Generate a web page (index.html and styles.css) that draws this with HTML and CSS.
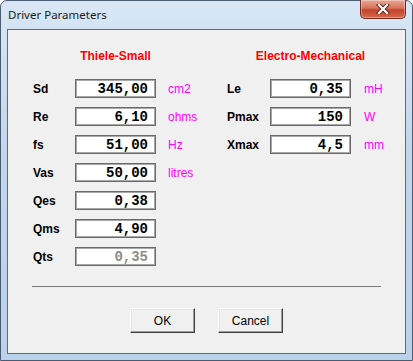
FILE: index.html
```html
<!DOCTYPE html>
<html lang="en">
<head>
    <meta charset="UTF-8">
    <title>Driver Parameters</title>
    <link rel="stylesheet" href="styles.css">
</head>
<body>
    <div class="window">
        <div class="titlebar">
            <span class="title">Driver Parameters</span>
            <button class="close" type="button">
                <svg width="18" height="10" viewBox="0 0 18 10">
                    <path d="M5 1 L13 9 M13 1 L5 9" stroke="#5a1e14" stroke-width="4" stroke-linecap="square"/>
                    <path d="M5 1 L13 9 M13 1 L5 9" stroke="#ffffff" stroke-width="2.2" stroke-linecap="square"/>
                </svg>
            </button>
        </div>

        <div class="client">
            <div class="columns">
                <div class="group">
                    <div class="heading"><span>Thiele-Small</span></div>

                    <label for="sd">Sd</label>
                    <input type="text" id="sd" value="345,00">
                    <span class="unit">cm2</span>

                    <label for="re">Re</label>
                    <input type="text" id="re" value="6,10">
                    <span class="unit">ohms</span>

                    <label for="fs">fs</label>
                    <input type="text" id="fs" value="51,00">
                    <span class="unit">Hz</span>

                    <label for="vas">Vas</label>
                    <input type="text" id="vas" value="50,00">
                    <span class="unit">litres</span>

                    <label for="qes">Qes</label>
                    <input type="text" id="qes" value="0,38">
                    <span class="unit"></span>

                    <label for="qms">Qms</label>
                    <input type="text" id="qms" value="4,90">
                    <span class="unit"></span>

                    <label for="qts">Qts</label>
                    <input type="text" id="qts" value="0,35" disabled>
                    <span class="unit"></span>
                </div>

                <div class="group">
                    <div class="heading"><span>Electro-Mechanical</span></div>

                    <label for="le">Le</label>
                    <input type="text" id="le" value="0,35">
                    <span class="unit">mH</span>

                    <label for="pmax">Pmax</label>
                    <input type="text" id="pmax" value="150">
                    <span class="unit">W</span>

                    <label for="xmax">Xmax</label>
                    <input type="text" id="xmax" value="4,5">
                    <span class="unit">mm</span>
                </div>
            </div>

            <hr class="separator">

            <div class="buttons">
                <button type="button" class="btn">OK</button>
                <button type="button" class="btn">Cancel</button>
            </div>
        </div>
    </div>
</body>
</html>
```

FILE: styles.css
```css
html, body {
    margin: 0;
    padding: 0;
}
body {
    width: 413px;
    height: 361px;
    overflow: hidden;
    background: #ffffff;
}
.window {
    box-sizing: border-box;
    width: 413px;
    height: 361px;
    border: 1px solid #4b5b70;
    border-radius: 7px 7px 0 0;
    background: linear-gradient(to bottom, #d9e7f5 0%, #c2d7ee 40%, #b9d1ea 100%);
    display: flex;
    flex-direction: column;
}
.titlebar {
    height: 28px;
    display: flex;
    align-items: flex-start;
    justify-content: space-between;
}
.title {
    font-family: "Noto Sans", sans-serif;
    font-size: 11.5px;
    color: #1b1b1b;
    margin: 6px 0 0 7px;
}
.close {
    width: 46px;
    height: 19px;
    margin: -1px 6px 0 0;
    padding: 0;
    border: 1px solid #6b2a1e;
    border-top: none;
    border-radius: 0 0 5px 5px;
    background: linear-gradient(to bottom, #e9a796 0%, #d6735c 45%, #c2432a 55%, #d46a4c 100%);
    box-shadow: inset 0 0 0 1px rgba(255, 255, 255, 0.35);
    display: flex;
    align-items: center;
    justify-content: center;
}
.client {
    flex: 1;
    margin: 0 6px 6px 6px;
    border: 1px solid #5d6b7c;
    background: #f0f0f0;
    padding: 19px 0 0 0;
    font-family: "Liberation Sans", Arial, sans-serif;
    font-size: 12px;
}
.columns {
    display: flex;
    padding-left: 25px;
}
.group {
    display: grid;
    grid-template-columns: 30px 81px auto;
    grid-auto-rows: 19px;
    grid-template-rows: 21px;
    column-gap: 12px;
    row-gap: 9px;
    align-items: center;
    align-content: start;
}
.group:first-child {
    width: 194px;
}
.group:last-child {
    grid-template-columns: 30px 81px auto;
    column-gap: 13px;
}
.heading {
    grid-column: 2;
    align-self: start;
    display: flex;
    justify-content: center;
    white-space: nowrap;
    line-height: 15px;
    font-weight: bold;
    color: #ff0000;
}
label {
    grid-column: 1;
    font-weight: bold;
    color: #000000;
}
input {
    box-sizing: border-box;
    width: 81px;
    height: 19px;
    margin: 0;
    padding: 0 7px 0 0;
    border: 1px solid #6a6a6a;
    box-shadow: inset 0 0 0 1px #a8a8a8;
    background: #ffffff;
    text-align: right;
    font-family: "Liberation Mono", "Courier New", monospace;
    font-size: 14px;
    font-weight: bold;
    color: #000000;
}
input:disabled {
    color: #8d8d8d;
    background: #ffffff;
}
.unit {
    color: #ff00ff;
}
.separator {
    margin: 20px 24px 0 24px;
    border: none;
    border-top: 1px solid #7a7a7a;
    height: 0;
}
.buttons {
    display: flex;
    justify-content: center;
    gap: 23px;
    margin-top: 21px;
}
.btn {
    box-sizing: border-box;
    width: 65px;
    height: 25px;
    padding: 0;
    border: 1px solid;
    border-color: #ffffff #404040 #404040 #ffffff;
    box-shadow: inset -1px -1px 0 #a0a0a0, inset 1px 1px 0 #e3e3e3;
    background: #f0f0f0;
    font-family: "Liberation Sans", Arial, sans-serif;
    font-size: 12px;
    color: #000000;
}
```
